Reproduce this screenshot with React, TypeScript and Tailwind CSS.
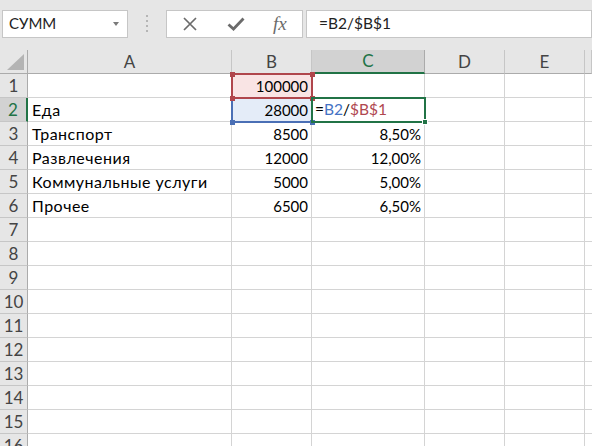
import React from "react";

const font = { fontFamily: "Lato, 'Noto Sans', sans-serif" };

type Row = { a: string; b: string; c: string };

const data: Row[] = [
  { a: "", b: "100000", c: "" },
  { a: "Еда", b: "28000", c: "" },
  { a: "Транспорт", b: "8500", c: "8,50%" },
  { a: "Развлечения", b: "12000", c: "12,00%" },
  { a: "Коммунальные услуги", b: "5000", c: "5,00%" },
  { a: "Прочее", b: "6500", c: "6,50%" },
];

const rows: Row[] = [
  ...data,
  ...Array.from({ length: 10 }, () => ({ a: "", b: "", c: "" })),
];

const cols = ["A", "B", "C", "D", "E", ""];

function Toolbar() {
  return (
    <div className="flex items-center h-[50px] bg-[#e6e6e6] pl-[2px] pb-[3px]">
      <div className="flex items-center w-[126px] h-[28px] bg-white border border-[#c6c6c6] pl-[6px] pr-[8px]">
        <span className="flex-1 text-[15px] text-[#222]">СУММ</span>
        <span className="w-0 h-0 border-l-[3px] border-r-[3px] border-t-[4px] border-l-transparent border-r-transparent border-t-[#7a7a7a]" />
      </div>
      <div className="flex flex-col gap-[3px] ml-[18px] mr-[18px]">
        <span className="w-[2px] h-[2px] bg-[#b5b5b5]" />
        <span className="w-[2px] h-[2px] bg-[#b5b5b5]" />
        <span className="w-[2px] h-[2px] bg-[#b5b5b5]" />
        <span className="w-[2px] h-[2px] bg-[#b5b5b5]" />
      </div>
      <div className="flex items-center w-[137px] h-[28px] bg-white border border-[#c6c6c6]">
        <svg width="16" height="16" viewBox="0 0 16 16" className="ml-[15px]">
          <path d="M2 2 L14 14 M14 2 L2 14" stroke="#6b6b6b" strokeWidth="1.7" fill="none" />
        </svg>
        <svg width="18" height="14" viewBox="0 0 18 14" className="ml-[29px]">
          <path d="M1.5 7.5 L6.5 12 L16.5 1.5" stroke="#6b6b6b" strokeWidth="2.8" fill="none" />
        </svg>
        <span
          className="ml-[28px] text-[19px] italic text-[#6b6b6b] leading-none"
          style={{ fontFamily: "'Liberation Serif', serif" }}
        >
          fx
        </span>
      </div>
      <div className="flex items-center flex-1 h-[28px] bg-white border border-[#c6c6c6] ml-[3px] pl-[12px]">
        <span className="text-[15.5px] text-[#222]">=B2/$B$1</span>
      </div>
    </div>
  );
}

function Corner({ color, className }: { color: string; className: string }) {
  return <span className={`absolute w-[5px] h-[5px] ${color} ${className}`} />;
}

export default function App() {
  return (
    <div className="w-[592px] h-[446px] overflow-hidden bg-white" style={font}>
      <Toolbar />
      <div className="relative">
        <div className="grid grid-cols-[28px_204px_80px_113px_80px_80px_1fr]">
          <div className="relative h-[24px] bg-[#e6e6e6] border-r border-b border-[#ababab]">
            <svg width="17" height="16" viewBox="0 0 17 16" className="absolute right-[3px] bottom-[3px]">
              <path d="M17 0 L17 16 L0 16 Z" fill="#b4b4b4" />
            </svg>
          </div>
          {cols.map((c, i) => (
            <div
              key={i}
              className={`h-[24px] flex items-center justify-center text-[17px] border-b border-r ${
                c === "C"
                  ? "bg-[#d2d2d2] text-[#217346] border-b-2 border-b-[#217346] border-r-[#ababab]"
                  : "bg-[#e6e6e6] text-[#444] border-[#ababab] border-r-[#c6c6c6]"
              }`}
            >
              {c}
            </div>
          ))}
          {rows.map((r, i) => (
            <React.Fragment key={i}>
              <div
                className={`h-[24px] flex items-center justify-center text-[17px] border-b border-[#c6c6c6] ${
                  i === 1
                    ? "bg-[#d2d2d2] text-[#217346] border-r-2 border-r-[#217346]"
                    : "bg-[#e6e6e6] text-[#444] border-r border-r-[#ababab]"
                }`}
              >
                {i + 1}
              </div>
              <div className="h-[24px] flex items-center pl-[4px] pt-[1px] text-[16px] tracking-[0.5px] text-black border-r border-b border-[#d4d4d4]">
                {r.a}
              </div>
              <div
                className={`h-[24px] flex items-center justify-end pr-[3px] pt-[1px] text-[15px] text-black border-r border-b border-[#d4d4d4] ${
                  i === 0 ? "bg-[#f9e4e4]" : i === 1 ? "bg-[#e4ecf8]" : ""
                }`}
              >
                {r.b}
              </div>
              <div className="h-[24px] flex items-center justify-end pr-[3px] pt-[1px] text-[15px] text-black border-r border-b border-[#d4d4d4]">
                {i === 1 ? (
                  <span className="w-full pl-[3px] text-left text-[15.5px]">
                    =<span className="text-[#4472c4]">B2</span>/<span className="text-[#b0474f]">$B$1</span>
                  </span>
                ) : (
                  r.c
                )}
              </div>
              <div className="h-[24px] border-r border-b border-[#d4d4d4]" />
              <div className="h-[24px] border-r border-b border-[#d4d4d4]" />
              <div className="h-[24px] border-b border-[#d4d4d4]" />
            </React.Fragment>
          ))}
        </div>

        {/* B2 reference box */}
        <div className="absolute left-[231px] top-[47px] w-[82px] h-[26px] border-2 border-[#4a6fb5] pointer-events-none">
          <Corner color="bg-[#4a6fb5]" className="-left-[3.5px] -bottom-[3.5px]" />
          <Corner color="bg-[#4a6fb5]" className="-right-[3.5px] -bottom-[3.5px]" />
        </div>
        {/* B1 reference box */}
        <div className="absolute left-[231px] top-[23px] w-[82px] h-[26px] border-2 border-[#b0464c] pointer-events-none">
          <Corner color="bg-[#b0464c]" className="-left-[3.5px] -top-[3.5px]" />
          <Corner color="bg-[#b0464c]" className="-right-[3.5px] -top-[3.5px]" />
          <Corner color="bg-[#b0464c]" className="-left-[3.5px] -bottom-[3.5px]" />
          <Corner color="bg-[#b0464c]" className="-right-[3.5px] -bottom-[3.5px]" />
        </div>
        {/* active cell C2 */}
        <div className="absolute left-[311px] top-[47px] w-[115px] h-[26px] border-2 border-[#217346] pointer-events-none">
          <span className="absolute -right-[4px] -bottom-[4px] w-[6px] h-[6px] bg-[#217346] border border-white" />
        </div>
      </div>
    </div>
  );
}
